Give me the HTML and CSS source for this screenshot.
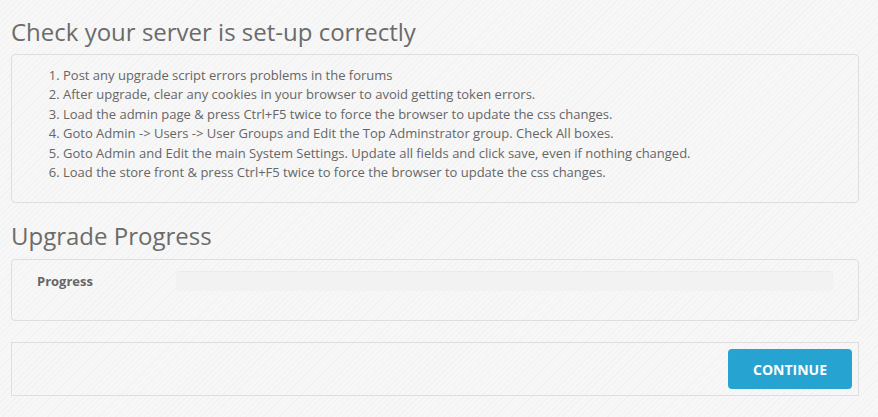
FILE: index.html
```html
<!DOCTYPE html>
<html>
<head>
<meta charset="utf-8">
<link rel="stylesheet" href="styles.css">
</head>
<body>
<div class="page">
  <h2 class="title">Check your server is set-up correctly</h2>
  <div class="panel panel-steps">
    <ol class="steps">
      <li>Post any upgrade script errors problems in the forums</li>
      <li>After upgrade, clear any cookies in your browser to avoid getting token errors.</li>
      <li>Load the admin page &amp; press Ctrl+F5 twice to force the browser to update the css changes.</li>
      <li>Goto Admin -&gt; Users -&gt; User Groups and Edit the Top Adminstrator group. Check All boxes.</li>
      <li>Goto Admin and Edit the main System Settings. Update all fields and click save, even if nothing changed.</li>
      <li>Load the store front &amp; press Ctrl+F5 twice to force the browser to update the css changes.</li>
    </ol>
  </div>
  <h2 class="title title-second">Upgrade Progress</h2>
  <div class="panel panel-progress">
    <div class="progress-row">
      <label class="progress-label">Progress</label>
      <div class="progress-bar"><div class="progress-fill" style="width:0%"></div></div>
    </div>
  </div>
  <div class="actions">
    <button class="btn-continue">CONTINUE</button>
  </div>
</div>
</body>
</html>
```
FILE: styles.css
```css
* { box-sizing: border-box; }
html, body { margin: 0; padding: 0; }
body {
  font-family: "Open Sans", "Liberation Sans", sans-serif;
  color: #666;
  background-color: #f7f7f7;
  background-image: repeating-linear-gradient(135deg, rgba(0,0,0,0.018) 0px, rgba(0,0,0,0.018) 1px, transparent 1px, transparent 4px);
  min-height: 417px;
}
.page {
  width: 848px;
  margin-left: 11px;
  padding-top: 15px;
}
.title {
  font-size: 24px;
  font-weight: 400;
  color: #6b6b6b;
  margin: 0 0 5px 0;
  line-height: 34px;
}
.title-second {
  margin-top: 16px;
  margin-bottom: 6px;
}
.panel {
  border: 1px solid #dedede;
  border-radius: 4px;
}
.panel-steps {
  padding: 11px 10px 19px 10px;
  height: 149px;
}
.steps {
  margin: 0;
  padding-left: 41px;
  font-size: 13px;
  line-height: 19.4px;
  color: #666;
}
.panel-progress {
  height: 62px;
  padding: 10px 25px 0 25px;
}
.progress-row {
  display: flex;
  align-items: center;
}
.progress-label {
  width: 139px;
  font-size: 13px;
  font-weight: 700;
  color: #666;
  line-height: 20px;
}
.progress-bar {
  flex: 1;
  height: 20px;
  margin-top: 1px;
  background: #f2f2f2;
  border-radius: 4px;
  box-shadow: inset 0 1px 1px rgba(0,0,0,0.03);
}
.progress-fill { height: 100%; background: #29a3d3; border-radius: 4px; }
.actions {
  margin-top: 21px;
  height: 54px;
  border: 1px solid #dedede;
  display: flex;
  justify-content: flex-end;
  padding: 6px 6px 0 0;
}
.btn-continue {
  width: 124px;
  height: 40px;
  border: none;
  border-radius: 4px;
  background: #27a3d2;
  color: #fff;
  font-family: "Open Sans", "Liberation Sans", sans-serif;
  font-weight: 700;
  font-size: 14px;
  padding: 0;
}
```
